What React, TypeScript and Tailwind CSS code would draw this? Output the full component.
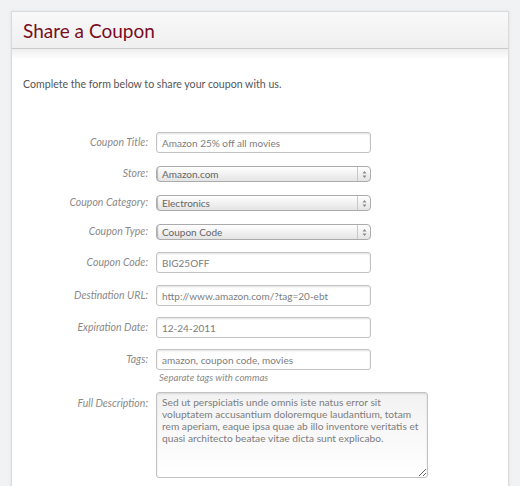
import React from 'react';

const font = { fontFamily: 'Lato, "DejaVu Sans", sans-serif' };

const inputCls =
  'h-[21px] w-[215px] rounded-[3px] border border-[#c2c2c2] bg-white pl-[5px] text-[10px] text-[#7d7d7d] shadow-[inset_0_1px_2px_rgba(0,0,0,0.12)] outline-none';

const Label: React.FC<{ children: React.ReactNode; className?: string }> = ({ children, className = '' }) => (
  <label className={`w-[136px] shrink-0 text-right text-[10.5px] italic text-[#8a8a8a] ${className}`}>{children}</label>
);

const TextRow: React.FC<{ label: string; value: string; className?: string }> = ({ label, value, className = '' }) => (
  <div className={`flex items-center gap-[8px] ${className}`}>
    <Label>{label}</Label>
    <input className={inputCls} style={font} defaultValue={value} readOnly />
  </div>
);

const SelectRow: React.FC<{ label: string; value: string; className?: string }> = ({ label, value, className = '' }) => (
  <div className={`flex items-center gap-[8px] ${className}`}>
    <Label>{label}</Label>
    <div className="flex h-[16px] w-[215px] items-stretch rounded-[4px] border border-[#ababab] bg-gradient-to-b from-white to-[#e4e4e4] shadow-[inset_2px_0_1px_-1px_rgba(0,0,0,0.25)]">
      <span className="flex-1 pl-[5px] text-[10px] leading-[14px] text-[#666]">{value}</span>
      <span className="flex w-[13px] flex-col items-center justify-center border-l border-[#c8c8c8]">
        <svg width="5" height="9" viewBox="0 0 5 9">
          <path d="M2.5 1 L4.5 3.5 H0.5 Z M2.5 8 L4.5 5.5 H0.5 Z" fill="#8a8a8a" />
        </svg>
      </span>
    </div>
  </div>
);

export default function App() {
  return (
    <div className="min-h-[486px] overflow-hidden bg-[#f1f2f4] px-[11px] pt-[11px]" style={font}>
      <div className="h-[486px] border border-[#dadada] bg-white shadow-[0_0_3px_rgba(0,0,0,0.08)]">
        <div className="flex h-[37px] items-center border-b border-[#c9c9c9] bg-gradient-to-b from-[#f9f9f9] to-[#efefef] pl-[11px]">
          <h1 className="text-[19px] leading-none text-[#7a0c1e]">Share a Coupon</h1>
        </div>
        <div className="h-[10px] bg-gradient-to-b from-[#eeeeee] to-white" />
        <p className="mt-[18px] pl-[11px] text-[10.6px] leading-[14px] text-[#555]">
          Complete the form below to share your coupon with us.
        </p>
        <div className="mt-[41px]">
          <TextRow label="Coupon Title:" value="Amazon 25% off all movies" />
          <SelectRow className="mt-[13px]" label="Store:" value="Amazon.com" />
          <SelectRow className="mt-[13px]" label="Coupon Category:" value="Electronics" />
          <SelectRow className="mt-[13px]" label="Coupon Type:" value="Coupon Code" />
          <TextRow className="mt-[12px]" label="Coupon Code:" value="BIG25OFF" />
          <TextRow className="mt-[12px]" label="Destination URL:" value="http://www.amazon.com/?tag=20-ebt" />
          <TextRow className="mt-[11px]" label="Expiration Date:" value="12-24-2011" />
          <TextRow className="mt-[11px]" label="Tags:" value="amazon, coupon code, movies" />
          <p className="mt-[2px] pl-[147px] text-[9.6px] italic leading-[12px] text-[#8a8a8a]">Separate tags with commas</p>
          <div className="mt-[8px] flex items-start gap-[8px]">
            <Label className="pt-[4px]">Full Description:</Label>
            <textarea
              className="h-[86px] w-[272px] resize rounded-[3px] border border-[#c2c2c2] bg-gradient-to-b from-[#f2f2f2] to-white px-[5px] pt-[3px] text-[10.2px] leading-[12px] text-[#7d7d7d] shadow-[inset_0_1px_2px_rgba(0,0,0,0.12)] outline-none"
              style={font}
              readOnly
              defaultValue="Sed ut perspiciatis unde omnis iste natus error sit voluptatem accusantium doloremque laudantium, totam rem aperiam, eaque ipsa quae ab illo inventore veritatis et quasi architecto beatae vitae dicta sunt explicabo."
            />
          </div>
        </div>
      </div>
    </div>
  );
}
